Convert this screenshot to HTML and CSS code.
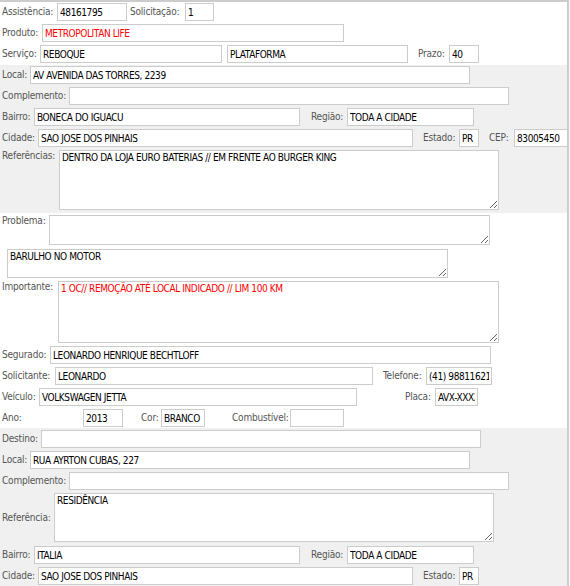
FILE: index.html
```html
<!DOCTYPE html>
<html lang="pt-BR">
<head>
<meta charset="utf-8">
<title>Atendimento</title>
<link rel="stylesheet" href="styles.css">
</head>
<body>
<div class="form">
  <div class="sec sec-top">
    <div class="row">
      <span class="lbl w55">Assistência:</span><input class="inp w70" value="48161795">
      <span class="lbl ml3 w55">Solicitação:</span><input class="inp w29" value="1">
    </div>
    <div class="row">
      <span class="lbl w40">Produto:</span><input class="inp w302 red" value="METROPOLITAN LIFE">
    </div>
    <div class="row">
      <span class="lbl w38">Serviço:</span><input class="inp w182" value="REBOQUE"><input class="inp ml5 w181" value="PLATAFORMA">
      <span class="lbl ml10 w31">Prazo:</span><input class="inp w30" value="40">
    </div>
  </div>

  <div class="sec sec-grey1">
    <div class="row">
      <span class="lbl w28">Local:</span><input class="inp w440" value="AV AVENIDA DAS TORRES, 2239">
    </div>
    <div class="row">
      <span class="lbl w67">Complemento:</span><input class="inp w440" value="">
    </div>
    <div class="row">
      <span class="lbl w32">Bairro:</span><input class="inp w266" value="BONECA DO IGUACU">
      <span class="lbl ml11 w36">Região:</span><input class="inp w127" value="TODA A CIDADE">
    </div>
    <div class="row">
      <span class="lbl w36">Cidade:</span><input class="inp w375" value="SAO JOSE DOS PINHAIS">
      <span class="lbl ml10 w36">Estado:</span><input class="inp w20" value="PR">
      <span class="lbl ml10 w25">CEP:</span><input class="inp w54" value="83005450">
    </div>
    <div class="row row-top">
      <span class="lbl w57">Referências:</span><textarea class="ta w440 h60">DENTRO DA LOJA EURO BATERIAS // EM FRENTE AO BURGER KING</textarea>
    </div>
  </div>

  <div class="sec sec-white2">
    <div class="row row-top">
      <span class="lbl w47">Problema:</span><textarea class="ta w441 h30"></textarea>
    </div>
    <div class="row row-top gap4">
      <textarea class="ta ml5 w441 h29">BARULHO NO MOTOR</textarea>
    </div>
    <div class="row row-top">
      <span class="lbl w56">Importante:</span><textarea class="ta w441 h62 red">1 OC// REMOÇÃO ATÉ LOCAL INDICADO // LIM 100 KM</textarea>
    </div>
    <div class="row">
      <span class="lbl w48">Segurado:</span><input class="inp w441" value="LEONARDO HENRIQUE BECHTLOFF">
    </div>
    <div class="row">
      <span class="lbl w53">Solicitante:</span><input class="inp w318" value="LEONARDO">
      <span class="lbl ml10 w43">Telefone:</span><input class="inp w66" value="(41) 988116219">
    </div>
    <div class="row">
      <span class="lbl w37">Veículo:</span><input class="inp w318" value="VOLKSWAGEN JETTA">
      <span class="lbl ml48 w30">Placa:</span><input class="inp w43" value="AVX-XXXX">
    </div>
    <div class="row">
      <span class="lbl w81">Ano:</span><input class="inp w40" value="2013">
      <span class="lbl ml18 w20">Cor:</span><input class="inp w44" value="BRANCO">
      <span class="lbl ml27 w58">Combustível:</span><input class="inp w54" value="">
    </div>
  </div>

  <div class="sec sec-grey2">
    <div class="row">
      <span class="lbl w39">Destino:</span><input class="inp w440" value="">
    </div>
    <div class="row">
      <span class="lbl w28">Local:</span><input class="inp w440" value="RUA AYRTON CUBAS, 227">
    </div>
    <div class="row">
      <span class="lbl w67">Complemento:</span><input class="inp w440" value="">
    </div>
    <div class="row row-mid">
      <span class="lbl w52">Referência:</span><textarea class="ta w440 h49">RESIDÊNCIA</textarea>
    </div>
    <div class="row gap4">
      <span class="lbl w32">Bairro:</span><input class="inp w266" value="ITALIA">
      <span class="lbl ml11 w36">Região:</span><input class="inp w127" value="TODA A CIDADE">
    </div>
    <div class="row">
      <span class="lbl w36">Cidade:</span><input class="inp w375" value="SAO JOSE DOS PINHAIS">
      <span class="lbl ml10 w36">Estado:</span><input class="inp w20" value="PR">
    </div>
  </div>
</div>
</body>
</html>
```

FILE: styles.css
```css
* { box-sizing: border-box; }

html, body {
  margin: 0;
  padding: 0;
  background: #ffffff;
}

body {
  font-family: "DejaVu Sans Condensed", "DejaVu Sans", sans-serif;
  font-stretch: condensed;
  font-size: 10px;
  line-height: 12px;
}

.form {
  width: 569px;
  border-top: 2px solid #cccccc;
  border-right: 2px solid #cccccc;
}

.sec {
  display: flex;
  flex-direction: column;
  gap: 3px;
}

.sec-top { background: #ffffff; padding: 1px 0 2px; }
.sec-grey1 { background: #f0f0f0; padding: 1px 0 3px; }
.sec-white2 { background: #ffffff; padding: 2px 0 1px; }
.sec-grey2 { background: #f0f0f0; padding: 2px 0 1px; }

.row {
  display: flex;
  align-items: center;
  padding-left: 2px;
}
.row-top { align-items: flex-start; }
.row-mid { align-items: center; }
.gap4 { margin-top: 1px; }

.lbl {
  flex: none;
  color: #555555;
  white-space: nowrap;
  letter-spacing: -0.2px;
}

.inp {
  flex: none;
  height: 18px;
  margin: 0;
  padding: 0 2px;
  border: 1px solid #cccccc;
  border-radius: 0;
  background: #ffffff;
  color: #000000;
  font: inherit;
  font-stretch: condensed;
  letter-spacing: -0.4px;
  outline: none;
}

.ta {
  flex: none;
  display: block;
  margin: 0;
  padding: 1px 2px;
  border: 1px solid #cccccc;
  border-radius: 0;
  background: #ffffff;
  color: #000000;
  font: inherit;
  font-stretch: condensed;
  letter-spacing: -0.4px;
  resize: both;
  overflow: hidden;
  outline: none;
}

.red { color: #ff0000; }

/* widths */
.w20 { width: 20px; }
.w25 { width: 25px; }
.w28 { width: 28px; }
.w29 { width: 29px; }
.w30 { width: 30px; }
.w31 { width: 31px; }
.w32 { width: 32px; }
.w36 { width: 36px; }
.w37 { width: 37px; }
.w38 { width: 38px; }
.w39 { width: 39px; }
.w40 { width: 40px; }
.w43 { width: 43px; }
.w44 { width: 44px; }
.w47 { width: 47px; }
.w48 { width: 48px; }
.w52 { width: 52px; }
.w53 { width: 53px; }
.w54 { width: 54px; }
.w55 { width: 55px; }
.w56 { width: 56px; }
.w57 { width: 57px; }
.w58 { width: 58px; }
.w66 { width: 66px; }
.w67 { width: 67px; }
.w70 { width: 70px; }
.w81 { width: 81px; }
.w127 { width: 127px; }
.w181 { width: 181px; }
.w182 { width: 182px; }
.w266 { width: 266px; }
.w302 { width: 302px; }
.w318 { width: 318px; }
.w375 { width: 375px; }
.w440 { width: 440px; }
.w441 { width: 441px; }

/* heights */
.h29 { height: 29px; }
.h30 { height: 30px; }
.h49 { height: 49px; }
.h60 { height: 60px; }
.h62 { height: 62px; }

/* left margins */
.ml3 { margin-left: 3px; }
.ml5 { margin-left: 5px; }
.ml10 { margin-left: 10px; }
.ml11 { margin-left: 11px; }
.ml18 { margin-left: 18px; }
.ml27 { margin-left: 27px; }
.ml48 { margin-left: 48px; }
```
